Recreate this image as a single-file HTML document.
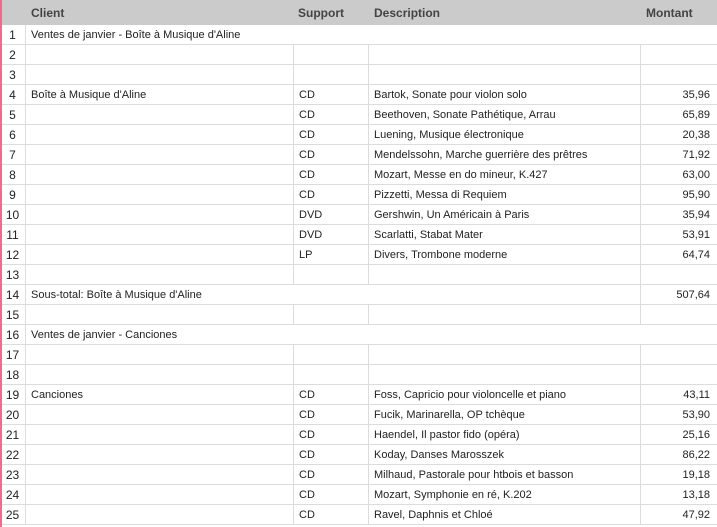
<!DOCTYPE html>
<html><head><meta charset="utf-8"><style>
*{margin:0;padding:0;box-sizing:border-box}
html,body{width:717px;height:527px;overflow:hidden}
body{background:#fff;font-family:"Liberation Sans",sans-serif;font-size:11px;color:#222;position:relative}
.hdr{position:absolute;left:0;top:0;width:717px;height:25px;background:#cbcbcb;font-weight:bold;font-size:12px;color:#444}
.hdr span{position:absolute;top:6px}
.pink{position:absolute;left:0;top:0;width:2px;height:527px;background:#f06a8e;z-index:5}
.row{position:absolute;left:0;width:717px;height:20px;border-bottom:1px solid #dcdcdc}
.row div{position:absolute;top:0;height:19px;line-height:21px;white-space:nowrap}
.n{left:0;width:26px;text-align:center;font-size:12px;border-right:1px solid #dcdcdc;height:20px!important}
.c{left:31px}
.s{left:293px;padding-left:5px;border-left:1px solid #dcdcdc;height:20px!important;width:75px}
.d{left:368px;padding-left:5px;border-left:1px solid #dcdcdc;height:20px!important;width:272px}
.m{left:640px;border-left:1px solid #dcdcdc;height:20px!important;width:72px;text-align:right;padding-right:2px}
</style></head><body>
<div class="pink"></div>
<div class="hdr"><span style="left:31px">Client</span><span style="left:298px">Support</span><span style="left:374px">Description</span><span style="left:646px">Montant</span></div>

<div class="row" style="top:25px"><div class="n">1</div><div class="c">Ventes de janvier - Boîte à Musique d'Aline</div></div>
<div class="row" style="top:45px"><div class="n">2</div><div class="s"></div><div class="d"></div><div class="m"></div></div>
<div class="row" style="top:65px"><div class="n">3</div><div class="s"></div><div class="d"></div><div class="m"></div></div>
<div class="row" style="top:85px"><div class="n">4</div><div class="c">Boîte à Musique d'Aline</div><div class="s">CD</div><div class="d">Bartok, Sonate pour violon solo</div><div class="m">35,96</div></div>
<div class="row" style="top:105px"><div class="n">5</div><div class="s">CD</div><div class="d">Beethoven, Sonate Pathétique, Arrau</div><div class="m">65,89</div></div>
<div class="row" style="top:125px"><div class="n">6</div><div class="s">CD</div><div class="d">Luening, Musique électronique</div><div class="m">20,38</div></div>
<div class="row" style="top:145px"><div class="n">7</div><div class="s">CD</div><div class="d">Mendelssohn, Marche guerrière des prêtres</div><div class="m">71,92</div></div>
<div class="row" style="top:165px"><div class="n">8</div><div class="s">CD</div><div class="d">Mozart, Messe en do mineur, K.427</div><div class="m">63,00</div></div>
<div class="row" style="top:185px"><div class="n">9</div><div class="s">CD</div><div class="d">Pizzetti, Messa di Requiem</div><div class="m">95,90</div></div>
<div class="row" style="top:205px"><div class="n">10</div><div class="s">DVD</div><div class="d">Gershwin, Un Américain à Paris</div><div class="m">35,94</div></div>
<div class="row" style="top:225px"><div class="n">11</div><div class="s">DVD</div><div class="d">Scarlatti, Stabat Mater</div><div class="m">53,91</div></div>
<div class="row" style="top:245px"><div class="n">12</div><div class="s">LP</div><div class="d">Divers, Trombone moderne</div><div class="m">64,74</div></div>
<div class="row" style="top:265px"><div class="n">13</div><div class="s"></div><div class="d"></div><div class="m"></div></div>
<div class="row" style="top:285px"><div class="n">14</div><div class="c">Sous-total: Boîte à Musique d'Aline</div><div class="m">507,64</div></div>
<div class="row" style="top:305px"><div class="n">15</div><div class="s"></div><div class="d"></div><div class="m"></div></div>
<div class="row" style="top:325px"><div class="n">16</div><div class="c">Ventes de janvier - Canciones</div></div>
<div class="row" style="top:345px"><div class="n">17</div><div class="s"></div><div class="d"></div><div class="m"></div></div>
<div class="row" style="top:365px"><div class="n">18</div><div class="s"></div><div class="d"></div><div class="m"></div></div>
<div class="row" style="top:385px"><div class="n">19</div><div class="c">Canciones</div><div class="s">CD</div><div class="d">Foss, Capricio pour violoncelle et piano</div><div class="m">43,11</div></div>
<div class="row" style="top:405px"><div class="n">20</div><div class="s">CD</div><div class="d">Fucik, Marinarella, OP tchèque</div><div class="m">53,90</div></div>
<div class="row" style="top:425px"><div class="n">21</div><div class="s">CD</div><div class="d">Haendel, Il pastor fido (opéra)</div><div class="m">25,16</div></div>
<div class="row" style="top:445px"><div class="n">22</div><div class="s">CD</div><div class="d">Koday, Danses Marosszek</div><div class="m">86,22</div></div>
<div class="row" style="top:465px"><div class="n">23</div><div class="s">CD</div><div class="d">Milhaud, Pastorale pour htbois et basson</div><div class="m">19,18</div></div>
<div class="row" style="top:485px"><div class="n">24</div><div class="s">CD</div><div class="d">Mozart, Symphonie en ré, K.202</div><div class="m">13,18</div></div>
<div class="row" style="top:505px"><div class="n">25</div><div class="s">CD</div><div class="d">Ravel, Daphnis et Chloé</div><div class="m">47,92</div></div>
</body></html>
